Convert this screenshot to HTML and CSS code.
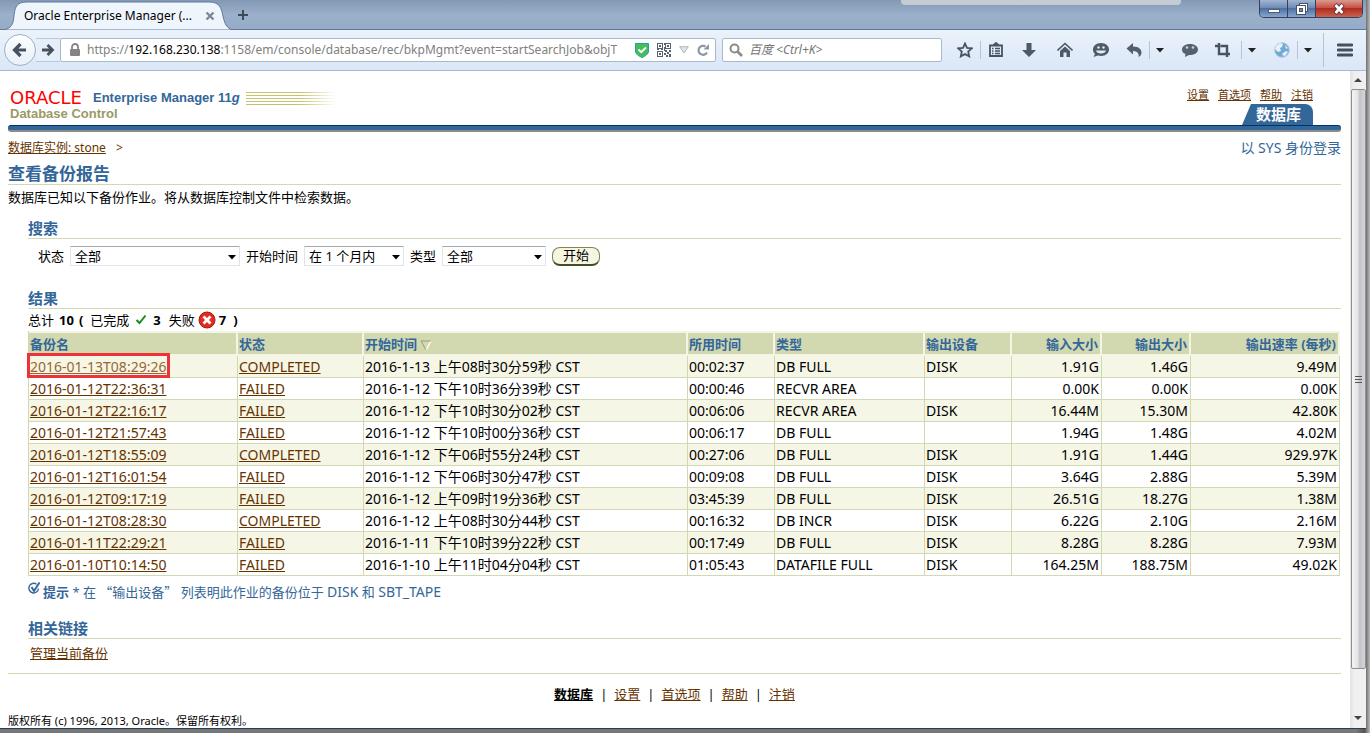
FILE: index.html
```html
<!DOCTYPE html>
<html lang="zh-CN">
<head>
<meta charset="utf-8">
<title>Oracle Enterprise Manager</title>
<link rel="stylesheet" href="styles.css">
</head>
<body>
<div class="window">
  <header class="titlebar">
    <div class="tab">
      <svg class="tab-shape" viewBox="0 0 240 30" preserveAspectRatio="none" aria-hidden="true">
        <path d="M0 30C10 30 13 26 14 18C15 8 16 2 27 2H212C224 2 225 8 227 17C229 26 232 30 240 30Z" fill="#eff5fd" stroke="#60779a"/>
      </svg>
      <span class="tab-title">Oracle Enterprise Manager (...</span>
      <button class="icon-btn tab-close" aria-label="关闭标签页"><svg width="10" height="10" viewBox="0 0 10 10"><path d="M1.500 1.500l7 7M8.500 1.500l-7 7" stroke="#7d8896" stroke-width="2.400"/></svg></button>
    </div>
    <button class="icon-btn tab-new" aria-label="新建标签页"><svg width="12" height="12" viewBox="0 0 12 12"><path d="M6 1v10M1 6h10" stroke="#3c4a5a" stroke-width="2"/></svg></button>
    <div class="glass-edge"></div>
    <div class="caption-buttons">
      <button class="caption" aria-label="最小化"><svg width="12" height="16" viewBox="0 0 12 16"><rect x=".5" y="8.500" width="11" height="3" fill="#fff" stroke="#555d70"/></svg></button>
      <button class="caption" aria-label="还原"><svg width="14" height="14" viewBox="0 0 14 14"><rect x="4.500" y="1.500" width="8" height="8" fill="#fff" stroke="#485268"/><rect x="1.500" y="3.500" width="9" height="9" fill="#fff" stroke="#485268"/><rect x="4.500" y="6.500" width="3" height="3" fill="#7b8fb1" stroke="#485268"/></svg></button>
      <button class="caption caption-close" aria-label="关闭"><svg width="14" height="12" viewBox="0 0 14 12"><path d="M3 1.500l8 9M11 1.500l-8 9" stroke="#5a3038" stroke-width="4.500"/><path d="M3.500 2l7 8M10.500 2l-7 8" stroke="#fff" stroke-width="2.700"/></svg></button>
    </div>
  </header>

  <nav class="toolbar">
    <button class="back" aria-label="后退"><svg width="16" height="16" viewBox="0 0 16 16"><path d="M14 8H3M8.500 2L2.500 8l6 6" fill="none" stroke="#46525f" stroke-width="3.200"/></svg></button>
    <button class="forward" aria-label="前进"><svg width="14" height="14" viewBox="0 0 14 14"><path d="M1 7h10M6.500 2l5 5-5 5" fill="none" stroke="#46525f" stroke-width="2.800"/></svg></button>
    <div class="address">
      <svg width="12" height="14" viewBox="0 0 12 14"><path d="M3 7V4a3 3 0 0 1 6 0v3" fill="none" stroke="#858585" stroke-width="1.800"/><rect x="1" y="6" width="10" height="7" rx="1" fill="#858585"/></svg>
      <div class="url" role="textbox" aria-label="地址" contenteditable="true" spellcheck="false">https://<b>192.168.230.138</b>:1158/em/console/database/rec/bkpMgmt?event=startSearchJob&amp;objT</div>
      <div class="address-icons">
        <svg width="14" height="15" viewBox="0 0 14 15"><path d="M.5.5h13V8c0 3-3 5-6.500 6.500C3.500 13 .5 11 .5 8z" fill="#45bd58" stroke="#1f9fb0"/><path d="M3.500 6.500L6.200 9.200 11 4.500" fill="none" stroke="#fff" stroke-width="2"/></svg>
        <svg width="14" height="14" viewBox="0 0 14 14" shape-rendering="crispEdges"><path d="M.5.500h5v5h-5zM8.500.500h5v5h-5zM.5 8.500h5v5h-5z" fill="none" stroke="#58616f"/><path d="M2 2h2v2H2zM10 2h2v2h-2zM2 10h2v2H2zM7 0h1v2H7zM7 4h1v4H7zM0 6h2v1H0zM4 6h2v1H4zM8 7h2v2H8zM12 7h2v2h-2zM10 9h2v2h-2zM7 10h2v2H7zM12 11h2v3h-2zM9 12h2v2H9z" fill="#58616f"/></svg>
        <svg width="10" height="8" viewBox="0 0 10 8"><path d="M.7.700h8.600L5 7z" fill="#e1e6ed" stroke="#abb4c0"/></svg>
        <button class="icon-btn" aria-label="刷新"><svg width="12" height="12" viewBox="0 0 12 12"><path d="M10 8.500A4.500 4.500 0 1 1 8.500 2.500" fill="none" stroke="#8b97a8" stroke-width="2.200"/><path d="M6.500 5.500H12V0z" fill="#8b97a8"/></svg></button>
      </div>
    </div>
    <label class="search">
      <svg width="14" height="14" viewBox="0 0 14 14"><circle cx="5.500" cy="5.500" r="4" fill="none" stroke="#8a8a8a" stroke-width="2"/><path d="M8.500 8.500l4.500 4.500" stroke="#8a8a8a" stroke-width="2.600"/></svg>
      <input type="text" placeholder="百度 &lt;Ctrl+K&gt;" aria-label="搜索">
    </label>
    <div class="tools">
      <button class="icon-btn tool" aria-label="收藏"><svg width="16" height="16" viewBox="0 0 16 16"><path d="M8 1.500l2 4.400 4.800.5-3.600 3.200 1 4.800L8 12l-4.200 2.400 1-4.800L1.200 6.400 6 5.900z" fill="none" stroke="#48535f" stroke-width="1.800"/></svg></button>
      <i class="sep"></i>
      <button class="icon-btn tool" aria-label="书签"><svg width="16" height="16" viewBox="0 0 16 16"><path d="M2 3.500h12v10.500H2zM5 3.500L8 1l3 2.500" fill="none" stroke="#48535f" stroke-width="1.800"/><path d="M4 6.500h1.500M7 6.500h5M4 9h1.500M7 9h5M4 11.500h1.500M7 11.500h5" stroke="#48535f" stroke-width="1.300"/></svg></button>
      <button class="icon-btn tool tool-wide" aria-label="下载"><svg width="16" height="16" viewBox="0 0 16 16"><path d="M5.500 1h5v7H15l-7 7-7-7h4.500z" fill="#4e5965"/></svg></button>
      <button class="icon-btn tool tool-wide" aria-label="主页"><svg width="16" height="16" viewBox="0 0 16 16"><path d="M.5 8.500L8 1.500l7.500 7" fill="none" stroke="#4e5965" stroke-width="1.600"/><path d="M3 9l5-4.500L13 9v6H9.500v-4.500h-3V15H3z" fill="#4e5965"/></svg></button>
      <button class="icon-btn tool tool-wide" aria-label="聊天"><svg width="18" height="16" viewBox="0 0 18 16"><path d="M9 1c5 0 8 3 8 6.500S14 14 9 14c-1 0-2 0-3-.4L1.500 15 3 12C1.500 11 1 9 1 7.500 1 4 4 1 9 1z" fill="#505b67"/><path d="M4 8.500h10c-.5 4-9.500 4-10 0z" fill="#e4edf7"/><circle cx="6.500" cy="5.500" r="1.200" fill="#e4edf7"/><circle cx="11.500" cy="5.500" r="1.200" fill="#e4edf7"/></svg></button>
      <button class="icon-btn tool" aria-label="撤销"><svg width="16" height="16" viewBox="0 0 16 16"><path d="M.5 6.500L7 1v3.500c6 0 8.500 3 8.500 6 0 2-1 3.500-3 4.500 1-3-1-6-5.500-6v3.500z" fill="#545f6b"/></svg></button>
      <i class="sep"></i>
      <button class="icon-btn drop" aria-label="撤销列表"><svg width="8" height="5" viewBox="0 0 8 5"><path d="M0 0h8L4 4.500z" fill="#222"/></svg></button>
      <button class="icon-btn tool" aria-label="消息"><svg width="18" height="16" viewBox="0 0 18 16"><path d="M9 2c5 0 8 2.500 8 5.500S14 13 9 13H8l-4 2 .5-3C2 11 1 9.500 1 7.500 1 4.500 4 2 9 2z" fill="#56616d"/><circle cx="6" cy="5.500" r="1.300" fill="#c9d2dc"/><circle cx="12" cy="5.500" r="1.300" fill="#c9d2dc"/></svg></button>
      <button class="icon-btn tool tool-wide" aria-label="截图"><svg width="16" height="16" viewBox="0 0 16 16"><path d="M4 1v11h7M0 4h3M5.500 4H12v11M12 12h3" fill="none" stroke="#48535f" stroke-width="2.400"/></svg></button>
      <i class="sep"></i>
      <button class="icon-btn drop" aria-label="截图列表"><svg width="8" height="5" viewBox="0 0 8 5"><path d="M0 0h8L4 4.500z" fill="#222"/></svg></button>
      <button class="icon-btn tool" aria-label="网络"><svg width="16" height="16" viewBox="0 0 16 16"><circle cx="8" cy="8" r="7.300" fill="#70a9d4" stroke="#b6c9dc"/><path d="M2 4l4-3 3 1-1 3-2 1 1 3-3 1-3-3zM9 11l3-2 2 1-3 4-3-1zM11 3l3 3-2 1z" fill="#e8f0f7"/></svg></button>
      <i class="sep"></i>
      <button class="icon-btn drop" aria-label="网络列表"><svg width="8" height="5" viewBox="0 0 8 5"><path d="M0 0h8L4 4.500z" fill="#222"/></svg></button>
      <i class="sep sep-tall"></i>
      <button class="icon-btn menu" aria-label="菜单"><svg width="16" height="14" viewBox="0 0 16 14"><path d="M1 2h14M1 7h14M1 12h14" stroke="#46515d" stroke-width="2.800" stroke-linecap="round"/></svg></button>
    </div>
  </nav>

  <div class="viewport">
    <div class="page">
      <header class="brand">
        <div class="brand-name">
          <div class="brand-line"><span class="oracle">ORACLE</span><span class="em">Enterprise Manager 11<i>g</i></span><span class="stripes"></span></div>
          <div class="product">Database Control</div>
        </div>
        <div class="brand-right">
          <div class="global-links"><a href="#">设置</a><a href="#">首选项</a><a href="#">帮助</a><a href="#">注销</a></div>
          <div class="db-tab">数据库</div>
        </div>
      </header>
      <div class="brand-bar"></div>

      <div class="crumbs"><span><a href="#">数据库实例: stone</a><span class="gt">&gt;</span></span><span class="login">以 SYS 身份登录</span></div>
      <h1>查看备份报告</h1>
      <p class="intro">数据库已知以下备份作业。将从数据库控制文件中检索数据。</p>

      <section class="block">
        <h2>搜索</h2>
        <form class="filters">
          <label for="status">状态</label>
          <span class="select select-wide"><select id="status"><option>全部</option></select><svg width="8" height="5" viewBox="0 0 8 5"><path d="M0 0h8L4 4.500z"/></svg></span>
          <label for="start">开始时间</label>
          <span class="select select-mid"><select id="start"><option>在 1 个月内</option></select><svg width="8" height="5" viewBox="0 0 8 5"><path d="M0 0h8L4 4.500z"/></svg></span>
          <label for="type">类型</label>
          <span class="select select-type"><select id="type"><option>全部</option></select><svg width="8" height="5" viewBox="0 0 8 5"><path d="M0 0h8L4 4.500z"/></svg></span>
          <button type="button" class="go">开始</button>
        </form>
      </section>

      <section class="block">
        <h2>结果</h2>
        <div class="totals">
          <span>总计</span><b>10</b><b class="open-paren">(</b><span>已完成</span>
          <svg class="done-icon" width="12" height="12" viewBox="0 0 12 12"><path d="M1.500 6l3 3L10.500 1.500" fill="none" stroke="#188a18" stroke-width="2"/></svg>
          <b>3</b><span class="failed">失败</span>
          <svg class="fail-icon" width="18" height="18" viewBox="0 0 18 18"><circle cx="9" cy="9" r="8" fill="#e52a1d" stroke="#9c1d16"/><path d="M5.500 5.500l7 7M12.500 5.500l-7 7" stroke="#fff" stroke-width="2.800"/></svg>
          <b>7</b><b class="close-paren">)</b>
        </div>
        <table class="jobs">
          <colgroup><col class="c1"><col class="c2"><col class="c3"><col class="c4"><col class="c5"><col class="c6"><col class="c7"><col class="c8"><col class="c9"></colgroup>
          <thead><tr><th>备份名</th><th>状态</th><th>开始时间 <svg class="sort" width="12" height="11" viewBox="0 0 12 11"><path d="M11 1L6 10" stroke="#fffff0" stroke-width="1.500"/><path d="M11 1H1l5 9" fill="none" stroke="#9b9f74"/></svg></th><th>所用时间</th><th>类型</th><th>输出设备</th><th class="num">输入大小</th><th class="num">输出大小</th><th class="num">输出速率 (每秒)</th></tr></thead>
          <tbody>
            <tr><td class="marked"><a href="#">2016-01-13T08:29:26</a><span class="mark"></span></td><td><a href="#">COMPLETED</a></td><td>2016-1-13 上午08时30分59秒 CST</td><td>00:02:37</td><td>DB FULL</td><td>DISK</td><td class="num">1.91G</td><td class="num">1.46G</td><td class="num">9.49M</td></tr>
            <tr><td><a href="#">2016-01-12T22:36:31</a></td><td><a href="#">FAILED</a></td><td>2016-1-12 下午10时36分39秒 CST</td><td>00:00:46</td><td>RECVR AREA</td><td></td><td class="num">0.00K</td><td class="num">0.00K</td><td class="num">0.00K</td></tr>
            <tr><td><a href="#">2016-01-12T22:16:17</a></td><td><a href="#">FAILED</a></td><td>2016-1-12 下午10时30分02秒 CST</td><td>00:06:06</td><td>RECVR AREA</td><td>DISK</td><td class="num">16.44M</td><td class="num">15.30M</td><td class="num">42.80K</td></tr>
            <tr><td><a href="#">2016-01-12T21:57:43</a></td><td><a href="#">FAILED</a></td><td>2016-1-12 下午10时00分36秒 CST</td><td>00:06:17</td><td>DB FULL</td><td></td><td class="num">1.94G</td><td class="num">1.48G</td><td class="num">4.02M</td></tr>
            <tr><td><a href="#">2016-01-12T18:55:09</a></td><td><a href="#">COMPLETED</a></td><td>2016-1-12 下午06时55分24秒 CST</td><td>00:27:06</td><td>DB FULL</td><td>DISK</td><td class="num">1.91G</td><td class="num">1.44G</td><td class="num">929.97K</td></tr>
            <tr><td><a href="#">2016-01-12T16:01:54</a></td><td><a href="#">FAILED</a></td><td>2016-1-12 下午06时30分47秒 CST</td><td>00:09:08</td><td>DB FULL</td><td>DISK</td><td class="num">3.64G</td><td class="num">2.88G</td><td class="num">5.39M</td></tr>
            <tr><td><a href="#">2016-01-12T09:17:19</a></td><td><a href="#">FAILED</a></td><td>2016-1-12 上午09时19分36秒 CST</td><td>03:45:39</td><td>DB FULL</td><td>DISK</td><td class="num">26.51G</td><td class="num">18.27G</td><td class="num">1.38M</td></tr>
            <tr><td><a href="#">2016-01-12T08:28:30</a></td><td><a href="#">COMPLETED</a></td><td>2016-1-12 上午08时30分44秒 CST</td><td>00:16:32</td><td>DB INCR</td><td>DISK</td><td class="num">6.22G</td><td class="num">2.10G</td><td class="num">2.16M</td></tr>
            <tr><td><a href="#">2016-01-11T22:29:21</a></td><td><a href="#">FAILED</a></td><td>2016-1-11 下午10时39分22秒 CST</td><td>00:17:49</td><td>DB FULL</td><td>DISK</td><td class="num">8.28G</td><td class="num">8.28G</td><td class="num">7.93M</td></tr>
            <tr><td><a href="#">2016-01-10T10:14:50</a></td><td><a href="#">FAILED</a></td><td>2016-1-10 上午11时04分04秒 CST</td><td>01:05:43</td><td>DATAFILE FULL</td><td>DISK</td><td class="num">164.25M</td><td class="num">188.75M</td><td class="num">49.02K</td></tr>
          </tbody>
        </table>
        <p class="tip"><svg width="12" height="14" viewBox="0 0 12 14"><path d="M8.500 2.200A4.800 4.800 0 1 0 10.500 6.500" fill="none" stroke="#336699" stroke-width="1.400"/><path d="M3.500 5L6 9 11.500.5" fill="none" stroke="#336699" stroke-width="2"/></svg><span><b>提示</b> * 在 <span class="quote">“输出设备”</span> 列表明此作业的备份位于 <span class="term">DISK</span> 和 <span class="term">SBT_TAPE</span></span></p>
      </section>

      <section class="block related">
        <h2>相关链接</h2>
        <a href="#">管理当前备份</a>
      </section>

      <footer class="foot">
        <div class="foot-links"><a class="current" href="#">数据库</a><span>|</span><a href="#">设置</a><span>|</span><a href="#">首选项</a><span>|</span><a href="#">帮助</a><span>|</span><a href="#">注销</a></div>
        <p class="copyright">版权所有 (c) 1996, 2013, Oracle。保留所有权利。</p>
      </footer>
    </div>
    <div class="scrollbar" aria-hidden="true">
      <svg width="8" height="4" viewBox="0 0 8 4"><path d="M0 4h8L4 0z" fill="#444"/></svg>
      <div class="thumb"><i></i><i></i><i></i></div>
      <svg width="8" height="4" viewBox="0 0 8 4"><path d="M0 0h8L4 4z" fill="#444"/></svg>
    </div>
  </div>
</div>
</body>
</html>
```
FILE: styles.css
```css
* { box-sizing: border-box; }

body {
  margin: 0;
  height: 100vh;
  padding: 0 4px 4px 0;
  overflow: hidden;
  background: linear-gradient(90deg, #777 0, #777 99%, #555 99.6%, #bbb 100%);
  font: 13px/20px "Noto Sans", "Noto Sans CJK SC", sans-serif;
  color: #000;
}

p, h1, h2 { margin: 0; }
button, input, select { font: inherit; color: inherit; }
svg { flex: none; }

.window {
  height: 100%;
  display: flex;
  flex-direction: column;
  background: #fff;
  border-bottom: 1px solid #22405c;
}

.icon-btn {
  display: flex;
  align-items: center;
  justify-content: center;
  padding: 0;
  border: 0;
  background: none;
}

/* Title bar */
.titlebar {
  flex: none;
  display: flex;
  height: 30px;
  background: linear-gradient(#8298b4, #9bb0ca 50%, #95abc7);
  border-bottom: 1px solid #60779a;
}
.tab {
  position: relative;
  display: flex;
  align-items: center;
  width: 236px;
  height: 30px;
  padding: 1px 21px 0 24px;
  justify-content: space-between;
  font-size: 12px;
}
.tab-shape { position: absolute; left: 0; top: 0; width: 100%; height: 30px; }
.tab-title { position: relative; white-space: nowrap; }
.tab-close { position: relative; }
.tab-new { width: 14px; }
.glass-edge {
  width: 280px;
  height: 5px;
  margin-left: auto;
  margin-right: 78px;
  border-radius: 0 0 4px 4px;
  background: #c5cbd3;
}
.caption-buttons {
  display: flex;
  height: 18px;
  margin-right: 3px;
  border: 1px solid #35415a;
  border-top: 0;
  border-radius: 0 0 5px 5px;
  overflow: hidden;
}
.caption {
  display: flex;
  align-items: center;
  justify-content: center;
  width: 28px;
  padding: 0;
  border: 0;
  border-right: 1px solid #35415a;
  background: linear-gradient(#a2b5d2, #708cb6 45%, #4e70a3 50%, #88a6cc);
}
.caption-close {
  width: 46px;
  border-right: 0;
  background: linear-gradient(#dc9a8e, #c65245 45%, #b02c1f 50%, #cb6250);
}

/* Navigation bar */
.toolbar {
  flex: none;
  display: flex;
  align-items: center;
  height: 41px;
  padding-left: 4px;
  background: linear-gradient(#ebf2fb, #dae7f7);
  border-bottom: 1px solid #a4bbd6;
}
.back {
  display: flex;
  flex: none;
  align-items: center;
  justify-content: center;
  width: 32px;
  height: 32px;
  padding: 0;
  border: 1px solid #9fb1c6;
  border-radius: 50%;
  background: linear-gradient(#fdfeff, #e9f0f8);
}
.forward {
  display: flex;
  flex: none;
  align-items: center;
  justify-content: center;
  width: 24px;
  height: 24px;
  padding: 0;
  border: solid #b8c9dc;
  border-width: 1px 0;
  background: #e5eef9;
}
.address, .search {
  display: flex;
  align-items: center;
  height: 24px;
  border: 1px solid #a9b9cc;
  border-radius: 2px;
  background: #fff;
}
.address { flex: 640 1 0; min-width: 0; padding: 0 6px 0 8px; gap: 6px; }
.url {
  flex: 1;
  min-width: 0;
  overflow: hidden;
  white-space: nowrap;
  font-size: 12px;
  color: #808080;
}
.url b { font-weight: 400; color: #000; }
.address-icons { display: flex; align-items: center; gap: 8px; padding-left: 2px; }
.search { flex: 206 1 0; min-width: 0; margin-left: 6px; padding: 0 6px; gap: 6px; }
.search input {
  flex: 1;
  min-width: 0;
  padding: 0;
  border: 0;
  outline: 0;
  background: none;
  font-size: 12px;
}
.search input::placeholder { color: #757575; font-style: italic; }
.tools {
  flex: none;
  display: flex;
  align-items: center;
  padding-left: 8px;
}
.tool { width: 30px; height: 24px; }
.tool-wide { width: 36px; }
.drop { width: 20px; height: 24px; margin-right: 5px; }
.menu { width: 42px; height: 24px; }
.sep { width: 1px; height: 18px; background: #b5c3d3; }
.sep-tall { height: 34px; }

/* Page */
.viewport { flex: 1; display: flex; min-height: 0; }
.page { flex: 1; min-width: 0; padding: 15px 9px 0 8px; overflow: hidden; }
.page a { color: #663300; }

.brand { display: flex; justify-content: space-between; align-items: flex-end; }
.brand-name {
  padding: 4px 0 3px 2px;
  font-family: "Liberation Sans", sans-serif;
  font-size: 13px;
  font-weight: 700;
  line-height: 16px;
}
.brand-line { display: flex; align-items: center; gap: 6px; }
.oracle {
  min-width: 77px;
  color: #f00;
  font-family: "DejaVu Sans", sans-serif;
  font-size: 18px;
  font-weight: 400;
}
.em { color: #336699; }
.stripes {
  width: 90px;
  height: 13px;
  background:
    linear-gradient(90deg, transparent 60%, #fff),
    repeating-linear-gradient(#c4c46e 0 1px, #fff 1px 3px);
}
.product { color: #999966; }
.brand-right { padding-right: 28px; }
.global-links { display: flex; gap: 9px; font-size: 11px; line-height: 18px; }
.db-tab {
  width: 71px;
  height: 21px;
  margin-left: auto;
  padding-left: 2px;
  background: #336699;
  border-top-right-radius: 8px;
  clip-path: polygon(9px 0, 100% 0, 100% 100%, 0 100%);
  color: #fff;
  font-size: 15px;
  font-weight: 700;
  line-height: 21px;
  text-align: center;
}
.brand-bar {
  height: 7px;
  border-top: 1px solid #003366;
  border-bottom: 2px solid #8b8b8b;
  border-radius: 3px;
  background: #336699;
}

.crumbs { display: flex; justify-content: space-between; padding-top: 6px; font-size: 12px; }
.gt { margin-left: 10px; color: #663300; }
.login { color: #336699; font-size: 14px; }

h1, h2 { color: #336699; border-bottom: 1px solid #d2d8b0; }
h1 { margin-top: 6px; font-size: 17px; line-height: 20px; }
h2 { font-size: 15px; line-height: 20px; }
.intro { padding-top: 2px; }

.block { margin-left: 20px; padding-top: 11px; }
.filters {
  display: flex;
  align-items: center;
  gap: 6px;
  height: 38px;
  padding: 0 0 4px 10px;
}
.select { position: relative; display: flex; height: 20px; }
.select select {
  width: 100%;
  padding: 0 20px 0 4px;
  border: 1px solid #dfe3ea;
  border-top-color: #a6a9ae;
  border-radius: 1px;
  background: #fff;
  appearance: none;
  line-height: 18px;
}
.select svg { position: absolute; right: 4px; top: 9px; pointer-events: none; }
.select-wide { width: 170px; }
.select-mid { width: 100px; }
.select-type { width: 104px; }
.go {
  height: 19px;
  padding: 0 10px;
  border: 1px solid #7c8657;
  border-bottom: 2px solid #434d24;
  border-radius: 8px;
  background: #f5f5e2;
  line-height: 15px;
}

.totals { display: flex; align-items: center; gap: 5px; height: 22px; }
.open-paren { margin-right: 2px; }
.done-icon { margin: 0 1px; }
.failed { margin-left: 3px; }
.fail-icon { margin: 0 -2px; }
.close-paren { margin-left: 2px; }

.jobs {
  width: calc(100% - 1px);
  table-layout: fixed;
  border-collapse: separate;
  border-spacing: 0;
  border-left: 1px solid #d2d8b0;
  font-size: 14px;
  line-height: 20px;
}
.c1 { width: 209px; }
.c2 { width: 126px; }
.c4 { width: 87px; }
.c5 { width: 150px; }
.c6 { width: 87px; }
.c7 { width: 90px; }
.c8 { width: 89px; }
.c9 { width: 149px; }
.jobs th, .jobs td { padding: 0 2px 0 1px; text-align: left; white-space: nowrap; }
.jobs th {
  height: 25px;
  border: solid #f5f5e5;
  border-width: 2px 2px 2px 0;
  background: #d2d8b0;
  color: #336699;
  font-size: 13px;
}
.jobs td {
  height: 22px;
  border: solid #d2d8b0;
  border-width: 0 1px 1px 0;
}
.jobs tbody tr:nth-child(odd) { background: #f6f6e6; }
.jobs .num { text-align: right; }
.sort { vertical-align: -2px; }
.marked { position: relative; }
.jobs .marked a { color: #996633; }
.mark {
  position: absolute;
  left: -2px;
  top: -3px;
  width: 143px;
  height: 25px;
  border: 3px solid #ee3338;
}

.tip { display: flex; gap: 3px; padding-top: 6px; color: #336699; }
.quote { font-family: "Noto Sans CJK SC", sans-serif; }
.term { font-size: 14px; }
.related { padding-top: 16px; }
.related a { display: inline-block; margin: 4px 0 0 2px; }
.foot { margin-top: 10px; border-top: 1px solid #d2d8b0; }
.foot-links {
  display: flex;
  justify-content: center;
  gap: 7px;
  padding-top: 10px;
}
.page .foot-links .current { color: #000; font-weight: 700; }
.copyright { padding-top: 7px; font-size: 11px; line-height: 20px; }

/* Scrollbar */
.scrollbar {
  flex: none;
  display: flex;
  flex-direction: column;
  align-items: center;
  width: 16px;
  padding: 7px 0 8px;
  background: linear-gradient(90deg, #e3e3e3, #f0f0f0 30%);
}
.thumb {
  flex: 1;
  display: flex;
  flex-direction: column;
  align-items: center;
  justify-content: center;
  gap: 2px;
  width: 15px;
  margin: 7px 0 47px;
  border: 1px solid #8f8f8f;
  border-radius: 2px;
  background: linear-gradient(90deg, #f5f5f5, #e3e3e6 45%, #c2c2c8 60%, #d6d6da);
}
.thumb i { width: 7px; height: 1px; background: #555; }
```
